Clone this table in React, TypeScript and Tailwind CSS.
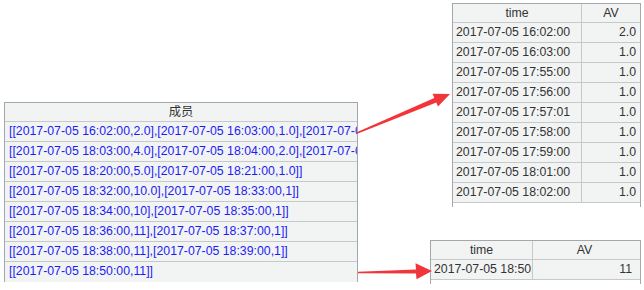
import React from 'react';

const members = [
    '[[2017-07-05 16:02:00,2.0],[2017-07-05 16:03:00,1.0],[2017-07-05 17:55:00,1.0],[2017-07-05 17:56:00,1.0]]',
    '[[2017-07-05 18:03:00,4.0],[2017-07-05 18:04:00,2.0],[2017-07-05 18:05:00,1.0]]',
    '[[2017-07-05 18:20:00,5.0],[2017-07-05 18:21:00,1.0]]',
    '[[2017-07-05 18:32:00,10.0],[2017-07-05 18:33:00,1]]',
    '[[2017-07-05 18:34:00,10],[2017-07-05 18:35:00,1]]',
    '[[2017-07-05 18:36:00,11],[2017-07-05 18:37:00,1]]',
    '[[2017-07-05 18:38:00,11],[2017-07-05 18:39:00,1]]',
    '[[2017-07-05 18:50:00,11]]',
];

const expanded = [
    ['2017-07-05 16:02:00', '2.0'],
    ['2017-07-05 16:03:00', '1.0'],
    ['2017-07-05 17:55:00', '1.0'],
    ['2017-07-05 17:56:00', '1.0'],
    ['2017-07-05 17:57:01', '1.0'],
    ['2017-07-05 17:58:00', '1.0'],
    ['2017-07-05 17:59:00', '1.0'],
    ['2017-07-05 18:01:00', '1.0'],
    ['2017-07-05 18:02:00', '1.0'],
];

const font = { fontFamily: '"Liberation Sans", Arial, "Noto Sans CJK SC", sans-serif' };

// header + rows share the same light grey cell background
const MemberTable = () => (
    <div className="w-[354px] h-[180px] border-l border-r border-t border-[#a4a8ac] bg-[#f2f4f4] overflow-hidden">
        <div className="h-[18px] flex items-center justify-center text-[12.3px] text-[#333]">成员</div>
        {members.map((m, i) => (
            <div key={i} className="h-[20px] border-t border-[#c5c9cc] flex items-center pl-[4px] whitespace-nowrap overflow-hidden text-[12.3px] text-[#1c1cf5]">
                {m}
            </div>
        ))}
    </div>
);

interface TimeTableProps {
    rows: string[][];
    timeWidth: string;
    avWidth: string;
    tail?: boolean;
}

const TimeTable = ({ rows, timeWidth, avWidth, tail }: TimeTableProps) => (
    <div className="border-l border-r border-t border-[#a4a8ac] bg-[#f2f4f4] text-[12.3px] text-[#333]">
        <div className="flex h-[18px]">
            <div className={`${timeWidth} flex items-center justify-center border-r border-[#c5c9cc]`}>time</div>
            <div className={`${avWidth} flex items-center justify-center`}>AV</div>
        </div>
        {rows.map((r, i) => (
            <div key={i} className="flex h-[20px] border-t border-[#c5c9cc]">
                <div className={`${timeWidth} flex items-center pl-[3px] border-r border-[#c5c9cc] whitespace-nowrap overflow-hidden`}>{r[0]}</div>
                <div className={`${avWidth} flex items-center justify-end pr-[4px]`}>{r[1]}</div>
            </div>
        ))}
        {tail && <div className="h-[5px] border-t border-[#c5c9cc] bg-white" />}
    </div>
);

const Arrows = () => (
    <svg className="absolute inset-0 pointer-events-none" width="644" height="290" viewBox="0 0 644 290">
        <polygon
            fill="#f2353b"
            points="356.7,132.2 434.3,97.9 432.6,93.8 450,94 438,106.6 436.3,102.5 357.3,133.8"
        />
        <polygon
            fill="#f2353b"
            points="358,271.8 416,269.6 415.5,263.3 432,271 416.5,279.3 416,273.6 358,273.2"
        />
    </svg>
);

export default function App() {
    return (
        <div className="relative w-[644px] h-[290px] overflow-hidden bg-white" style={font}>
            <div className="flex">
                <div className="pt-[102px] pl-[4px]">
                    <MemberTable />
                </div>
                <div className="ml-[72px] flex flex-col">
                    <div className="ml-[22px] mt-[3px]">
                        <TimeTable rows={expanded} timeWidth="w-[129px]" avWidth="w-[58px]" tail />
                    </div>
                    <div className="mt-[33px]">
                        <TimeTable rows={[['2017-07-05 18:50:00', '11']]} timeWidth="w-[102px]" avWidth="w-[103px]" tail />
                    </div>
                </div>
            </div>
            <Arrows />
        </div>
    );
}
